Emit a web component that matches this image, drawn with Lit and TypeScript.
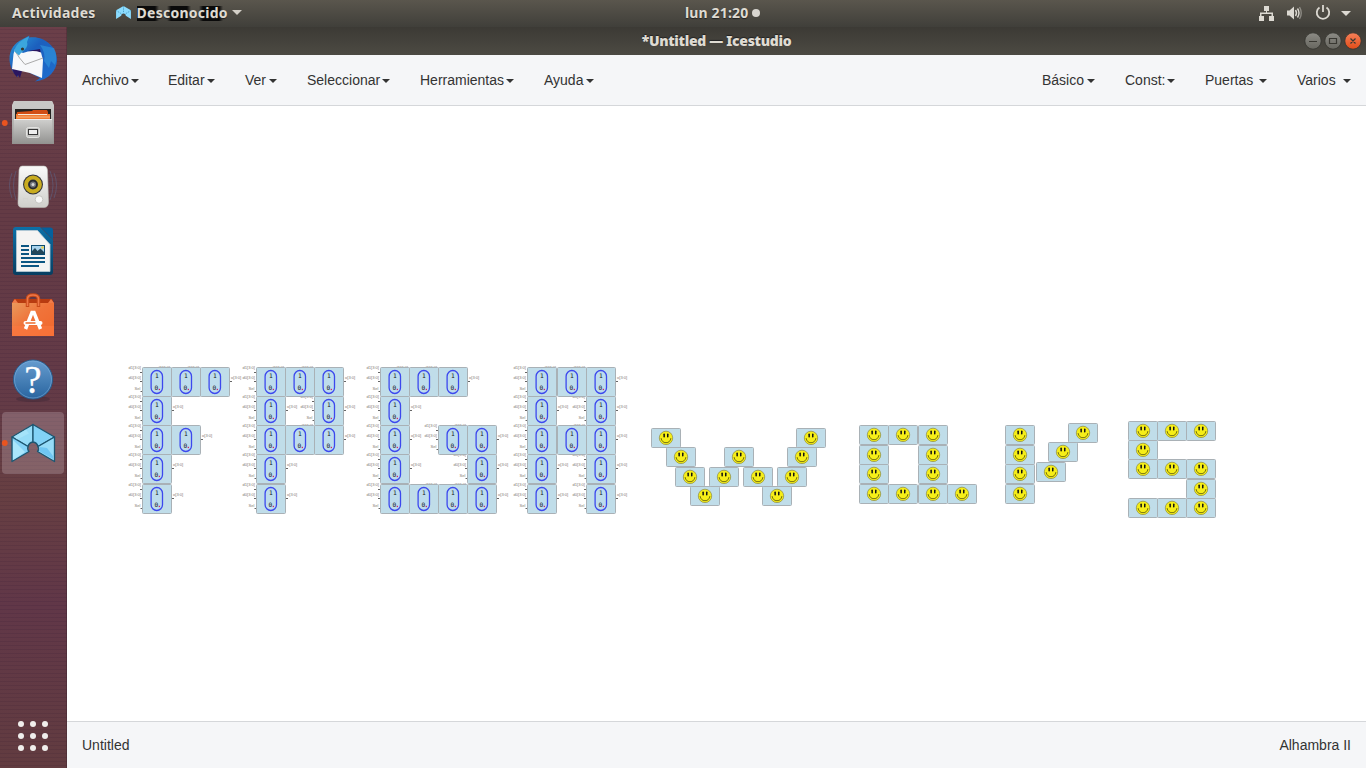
import { LitElement, html, svg, css } from "lit";
import { customElement } from "lit/decorators.js";

type Cell = [number, number];
interface Glyph { pins: [string, string, string, string]; cells: Cell[]; }

const ROWS = [367.5, 396.5, 425.5, 454.5, 484.5];

/** Expands column positions and per-row column indexes into block corners. */
const grid = (xs: number[], ys: number[], rows: number[][]): Cell[] =>
  rows.flatMap((cols, r) => cols.map((c) => [xs[c], ys[r]] as Cell));

const MUXES: Glyph[] = [
  { pins: ["d1[3:0]", "d0[3:0]", "Sel", "o[3:0]"],
    cells: grid([142.5, 171.5, 200.5], ROWS, [[0, 1, 2], [0], [0, 1], [0], [0]]) },
  { pins: ["d1[3:0]", "d0[3:0]", "Sel", "o[3:0]"],
    cells: grid([256.5, 285.5, 314.5], ROWS, [[0, 1, 2], [0, 2], [0, 1, 2], [0], [0]]) },
  { pins: ["d1[3:0]", "d0[3:0]", "Sel", "o[3:0]"],
    cells: grid([380.5, 409.5, 438.5, 467.5], ROWS, [[0, 1, 2], [0], [0, 2, 3], [0, 3], [0, 1, 2, 3]]) },
  { pins: ["d1[3:0]", "d0[3:0]", "Sel", "o[3:0]"],
    cells: grid([527.5, 557.5, 586.5], ROWS, [[0, 1, 2], [0, 2], [0, 1, 2], [0, 2], [0, 2]]) },
];

const Q_ROWS = [425.5, 445.5, 464.5, 484.5];
const SMILEYS: Cell[] = [
  [651.5, 428.5], [666.5, 447.5], [675.5, 467.5], [690.5, 486.5], [709.5, 467.5], [724.5, 447.5],
  [743.5, 467.5], [762.5, 486.5], [777.5, 467.5], [787.5, 447.5], [796.5, 428.5],
  ...grid([859.5, 888.5, 918.5, 947.5], Q_ROWS, [[0, 1, 2], [0, 2], [0, 2], [0, 1, 2, 3]]),
  ...grid([1005.5], Q_ROWS, [[0], [0], [0], [0]]),
  [1068.5, 423.5], [1048.5, 442.5], [1036.5, 462.5],
  ...grid([1128.5, 1157.5, 1186.5], [421.5, 440.5, 459.5, 479.5, 498.5],
    [[0, 1, 2], [0], [0, 1, 2], [2], [0, 1, 2]]),
];

@customElement("block-canvas")
export class BlockCanvas extends LitElement {
  static styles = css`
    :host { display: block; background: #fff; overflow: hidden; }
    svg { display: block; }
    .block { fill: #c0dde9; stroke: #a9b1b6; stroke-width: 1; }
    .pill { fill: #bddcec; stroke: #3c48ee; stroke-width: 1.3; }
    .bit { font: 6.2px "DejaVu Sans Mono", monospace; fill: #151515; }
    .dot { fill: #d01860; }
    .pin { font: 4.1px "Liberation Sans", sans-serif; fill: #857b75; }
    .stub { stroke: #666; stroke-width: 1; }
    .face { fill: #f6ee18; stroke: #8b8940; stroke-width: .7; }
    .eye { fill: #111; }
    .smile { fill: none; stroke: #55530f; stroke-width: .8; }
  `;
  private pins([x, y]: Cell, p: Glyph["pins"]) {
    return svg`
      <text class="pin" x=${x - 1.5} y=${y + 1} text-anchor="end">${p[0]}</text>
      <text class="pin" x=${x - 1.5} y=${y + 11.2} text-anchor="end">${p[1]}</text>
      <text class="pin" x=${x - 2} y=${y + 22.2} text-anchor="end">${p[2]}</text>
      <text class="pin" x=${x + 30.5} y=${y + 11.2}>${p[3]}</text>
      <path class="stub" d="M${x - 2.5} ${y + 5}h2.5M${x - 2.5} ${y + 14}h2.5M${x - 2} ${y + 24}h2M${x + 29} ${y + 14}h2.5"/>`;
  }
  private mux([x, y]: Cell) {
    return svg`
      <rect class="block" x=${x} y=${y} width="29" height="29" rx="1"/>
      <rect class="pill" x=${x + 8.6} y=${y + 3} width="11.4" height="23" rx="5.7"/>
      <text class="bit" x=${x + 12.4} y=${y + 10.5}>1</text>
      <text class="bit" x=${x + 11.9} y=${y + 22.5}>0</text>
      <rect class="dot" x=${x + 16.2} y=${y + 21.3} width="1.2" height="1.3"/>`;
  }
  private smiley([x, y]: Cell) {
    return svg`
      <rect class="block" x=${x} y=${y} width="29" height="19" rx="1"/>
      <circle class="face" cx=${x + 14.5} cy=${y + 9.4} r="6.7"/>
      <rect class="eye" x=${x + 11.9} y=${y + 5} width="1.5" height="4" rx=".7"/>
      <rect class="eye" x=${x + 15.5} y=${y + 5} width="1.5" height="4" rx=".7"/>
      <path class="smile" d="M${x + 9.6} ${y + 9.6}q.8 4.6 4.9 4.6t4.9-4.6"/>`;
  }
  render() {
    return html`<svg width="1299" height="615" viewBox="67 106 1299 615">
      ${MUXES.map((m) => m.cells.map((c) => this.pins(c, m.pins)))}
      ${MUXES.map((m) => m.cells.map((c) => this.mux(c)))}
      ${SMILEYS.map((c) => this.smiley(c))}
    </svg>`;
  }
}

const iceLogo = svg`
  <g stroke="#1d5670" stroke-width="1.3" stroke-linejoin="round">
    <path fill="#96dcf8" d="M33 424.500L12 437l16 9.500q1-4 5-4.500z"/>
    <path fill="#82d2f6" d="M33 424.500L54.500 437l-16.500 9.500q-1-4-5-4.500z"/>
    <path fill="#84d2f7" d="M12 437v24.500l17-10q-2-2-1-5z"/>
    <path fill="#96dcf8" d="M54.500 437v24.500l-17-10q2-2 .500-5z"/>
  </g>
  <path d="M13 440l12 12-12 8z" fill="#a9e6fb"/><path d="M14 436.500l12-7 3 4-12 6z" fill="#abe6fb" opacity=".7"/>
  <path d="M40 447l7 1 6 8v3l-14-8z" fill="#6fc6f2"/>`;

const iceLogoSmall = svg`
  <path fill="#8bdcff" d="M8 0L0 4.500V14l5.500-3.500Q5.500 8 8 8t2.500 2.500L16 14V4.500z"/>
  <path fill="none" stroke="#3a8fb5" stroke-width=".8" stroke-dasharray="1.500 1" d="M8 0v8M0 4.800l6 3.700M16 4.800l-6 3.700"/>`;

@customElement("app-dock")
export class AppDock extends LitElement {
  static styles = css`
    :host {
      display: block; overflow: hidden;
      background:
        repeating-linear-gradient(#0000 0 2px, rgba(30, 10, 40, .1) 2px 3px, #0000 3px 4px),
        linear-gradient(#6b3f49, #643b45 25%, #633a47 48%, #673f42 63%, #613748 78%, #623c40);
      box-shadow: inset -1px 0 rgba(40, 20, 30, .25);
    }
    svg { display: block; }
    .q { font: 39px "Liberation Serif", serif; fill: #fff; stroke: #fff; stroke-width: .3; }
  `;
  render() {
    return html`<svg width="67" height="741" viewBox="0 27 67 741">
      <defs>
        <linearGradient id="bird" x1="0" y1="0" x2="1" y2="1"><stop offset="0" stop-color="#2ba0dc"/><stop offset=".4" stop-color="#1c5fbd"/><stop offset="1" stop-color="#1e6fd0"/></linearGradient>
        <linearGradient id="metal" x1="0" y1="0" x2="0" y2="1"><stop offset="0" stop-color="#d0d0ce"/><stop offset="1" stop-color="#929290"/></linearGradient>
        <linearGradient id="white" x1="0" y1="0" x2="0" y2="1"><stop offset="0" stop-color="#fafafa"/><stop offset="1" stop-color="#cfcfcb"/></linearGradient>
        <linearGradient id="navy" x1="0" y1="0" x2="0" y2="1"><stop offset="0" stop-color="#0c70a8"/><stop offset="1" stop-color="#073e61"/></linearGradient>
        <linearGradient id="bag" x1="0" y1="0" x2="1" y2="1"><stop offset="0" stop-color="#e99a5c"/><stop offset=".45" stop-color="#f0733a"/><stop offset="1" stop-color="#f0672c"/></linearGradient>
        <linearGradient id="help" x1="0" y1="0" x2="0" y2="1"><stop offset="0" stop-color="#669ccf"/><stop offset="1" stop-color="#29659f"/></linearGradient>
      </defs>

      <path fill="url(#bird)" d="M9.500 60C9 49 16 42 22 39.500L29.500 35.500L29 37.500C43 35 57 46 57 60C57 70 49 80 35 81.500L40 78L30 73L17 66L18 77C13 73 10 67 9.500 60z"/>
      <path fill="#2f94db" opacity=".65" d="M40 45l14 3q4 8 1 17l-4-4-2 7-5-7q2-8-4-16z"/>
      <path fill="#2a1660" d="M12 67l10 4-2 7-2-3-1 2q-4-3-5-10zM28 51l12-2 1 5z"/>
      <path fill="#f7f8fa" d="M12 69l1.500-15L15 49l8 4q9-3.500 18-.500l2 7.500-1 18-12-5z"/>
      <path fill="none" stroke="#aaa" stroke-width="1" d="M15 51q4 7 10 13.500l18-6.500"/>
      <path fill="#3ba6dd" d="M14 51C17 42 24 39 29 36.500L27 42C29 48 23 50 19 55.500z"/>
      <circle cx="22.500" cy="49" r="1.600" fill="#3a3427"/>

      <path d="M14 101h38l2 4v39H12v-39z" fill="url(#metal)"/>
      <path d="M14 101h38l1.500 5H12.500z" fill="#c8c8c6"/>
      <rect x="15" y="109" width="36" height="10" fill="#252422"/>
      <path d="M17 112l15-1 1-1h14l1 2v7H16z" fill="#d24e14"/><path d="M16 114h34v5H16z" fill="#f37b31"/><path d="M18 114.500h29" stroke="#f8ead9" stroke-width="1"/><path d="M17 117h33" stroke="#f5b783"/>
      <path d="M14 119h38l1 25H13z" fill="url(#metal)"/><path d="M14 119.500h38" stroke="#eee"/>
      <rect x="26.500" y="127.500" width="13" height="10" rx="2" fill="#c4c4c2" stroke="#e3e3e1"/>
      <rect x="28.500" y="129.500" width="9" height="5" fill="#eee" stroke="#383838"/>

      <g fill="none" stroke="#5b6e96" stroke-width="1" opacity=".45"><path d="M16 171q-5 14 0 29M12 173q-5 12 0 25M50 171q6 14 0 29M54 173q5 12 0 25"/></g>
      <path d="M22 166h22q3 0 3.500 4l1 32q0 5-4 5.500h-23q-4-.500-3.500-5.500l1-32q.500-4 3-4z" fill="url(#white)" stroke="#b8b8b4" stroke-width=".6"/>
      <circle cx="33" cy="184.500" r="10" fill="#33343a"/><circle cx="33" cy="184.500" r="6.900" fill="none" stroke="#c9ac20" stroke-width="4"/><circle cx="33" cy="184.500" r="3.800" fill="#71747a" stroke="#28292d" stroke-width="1.400"/><circle cx="33" cy="184.500" r="1.500" fill="#d8d8d8"/>
      <circle cx="39" cy="199.500" r="3.800" fill="#f8f8f8" stroke="#c6c6c2"/><rect x="23.500" y="198.500" width="4" height="4" fill="none" stroke="#d5d5d1"/>

      <path d="M16 227h24l13 13v32q0 3-3 3H16q-3 0-3-3v-42q0-3 3-3z" fill="url(#navy)"/>
      <path d="M41 227.500h9q3 0 3 3v9z" fill="#04619d"/>
      <path d="M16.500 230.500h21l12.500 14v27H16.500z" fill="#f4f4f3" stroke="#b9cbd5" stroke-width=".8"/>
      <path d="M21 246h8M21 250h8M21 254h8M21 258h24M21 262h24M21 266h18" stroke="#0b5682" stroke-width="2"/>
      <rect x="31.500" y="245.500" width="13" height="9" fill="#a8d3ed" stroke="#0b4b70"/><path d="M32 254v-3l3-3 2.500 3 3-2.500 3.500 3.500v2z" fill="#22475a"/><circle cx="42.500" cy="247.500" r="1.300" fill="#f1cf43"/>

      <path d="M14 299h38l2 4H12z" fill="#b83b10"/><path d="M12 303l3-4 3 4zM48 303l3-4 3 4z" fill="#ef7c4a"/>
      <path d="M12 303h42v33H12z" fill="url(#bag)"/>
      <path d="M27.500 307v-8q0-4 5.500-4t5.500 4v8" fill="none" stroke="#c94b19" stroke-width="3.500"/><path d="M27.500 306v-7q0-4 5.500-4t5.500 4v7" fill="none" stroke="#ee7748" stroke-width="1.500"/>
      <path d="M12 326h42v10H12z" fill="#ff7c45" opacity=".45"/>
      <path d="M25.500 329L32 312.500h2L40.500 329" fill="none" stroke="#fff" stroke-width="3.500"/>
      <rect x="23.500" y="321" width="19" height="4" rx="2" fill="#fff"/><path d="M25.500 323h10" stroke="#ed6b2e" stroke-width="1.500"/>

      <ellipse cx="33" cy="399" rx="17" ry="3" fill="#2b1e30" opacity=".3"/>
      <circle cx="33" cy="379.500" r="19.500" fill="url(#help)" stroke="#285c8d" stroke-width="1"/><circle cx="33" cy="379.500" r="18.500" fill="none" stroke="#7fb0dc" stroke-width=".8" opacity=".7"/>
      <text class="q" x="33" y="393" text-anchor="middle">?</text>

      <rect x="2" y="412" width="62" height="62" rx="4" fill="#d6c3cb" opacity=".27"/>
      ${iceLogo}
      <circle cx="4.800" cy="123" r="2.900" fill="#e95420"/><circle cx="4.800" cy="443" r="2.900" fill="#e95420"/>
      ${[724, 736, 748].map((y) => [21, 33, 45].map((x) => svg`<circle cx=${x} cy=${y} r="3" fill="#f0eeec"/>`))}
    </svg>`;
  }
}

interface MenuItem { label: string; width: number; }
const LEFT: MenuItem[] = [
  { label: "Archivo", width: 49 }, { label: "Editar", width: 39 }, { label: "Ver", width: 24 },
  { label: "Seleccionar", width: 75 }, { label: "Herramientas", width: 86 }, { label: "Ayuda", width: 42 },
];
const RIGHT: MenuItem[] = [
  { label: "Básico", width: 45 }, { label: "Const:", width: 42 }, { label: "Puertas", width: 54 }, { label: "Varios", width: 46 },
];

@customElement("app-root")
export class AppRoot extends LitElement {
  static styles = css`
    :host { display: grid; width: 1366px; height: 768px; grid-template: 27px 741px / 67px 1299px; overflow: hidden; font: 14px "Liberation Sans", Arial, sans-serif; color: #333; }
    .panel { grid-column: 1 / 3; display: grid; grid-template-columns: 685px auto 1fr; align-items: center; padding-bottom: 2px; background: linear-gradient(#5a564d, #403f3a); color: #dfdbd2; font: 700 14px/25px "Noto Sans", sans-serif; text-shadow: 0 1px 1px #222; }
    .start { display: flex; align-items: center; padding-left: 12px; letter-spacing: .25px; }
    .app { display: flex; align-items: center; margin-left: 20px; }
    .app svg { margin-right: 6px; }
    .name {
      line-height: 20px;
      background:
        linear-gradient(90deg, #0a0a0a 0 18px, #0a0a0a00 22px 30px, #0a0a0a 34px 50px, #0a0a0a00 54px 62px, #0a0a0a 66px 82px, #0a0a0a00 86px) 0 3px / 100% 15px no-repeat;
    }
    .tri { border: 5px solid transparent; border-top-color: #d4d0c8; border-bottom: 0; }
    .name + .tri { margin-left: 4px; }
    .clock { display: flex; align-items: center; gap: 4px; letter-spacing: .15px; }
    .clock i { width: 8px; height: 8px; border-radius: 50%; background: #d8d5cf; }
    .tray { display: flex; justify-content: flex-end; padding-right: 15px; }
    .window { display: grid; grid-template-rows: 28px 50px 1px 615px 1px 46px; }
    .title { display: grid; grid-template-columns: 1fr auto 1fr; align-items: center; background: linear-gradient(#3c3a35, #4c4a43); color: #dfdbd2; font: 700 14px/28px "Noto Sans", sans-serif; letter-spacing: -.32px; text-shadow: 0 -1px 1px #222; }
    .title b { grid-column: 2; }
    .controls { display: flex; justify-content: flex-end; padding-right: 4px; }
    .menubar, .status { background: #f5f6f8; display: flex; justify-content: space-between; align-items: center; padding: 0 15px; }
    .group { display: flex; gap: 30px; }
    .group:first-child .item:first-child { margin-right: -1px; }
    .item { display: flex; align-items: center; white-space: nowrap; }
    .caret { border: 4px solid transparent; border-top-color: #333; border-bottom: 0; margin-top: 2px; }
    .line { background: #d5d7da; }
  `;
  private menu(items: MenuItem[]) {
    return html`<div class="group">${items.map((i) => html`<div class="item"><span style="width:${i.width}px">${i.label}</span><span class="caret"></span></div>`)}</div>`;
  }
  render() {
    return html`
      <header class="panel">
        <div class="start"><span>Actividades</span>
          <div class="app"><svg width="15" height="13" viewBox="0 0 16 14">${iceLogoSmall}</svg>
            <span class="name">Desconocido</span><span class="tri"></span></div>
        </div>
        <div class="clock">lun 21:20<i></i></div>
        <div class="tray"><svg width="93" height="20" viewBox="1258 3 93 20" fill="#dcd9d2">
          <path d="M1264 6h5v5h-2v1.500h6V16h1v5h-5v-5h2.500v-2h-10v2h2.500v5h-5v-5h1v-3.500h6V11h-2z" />
          <path d="M1287 10.500h2.500l4.500-4v13l-4.500-4h-2.500z"/>
          <g fill="none" stroke="#dcd9d2" stroke-width="1.400"><path d="M1295.500 10q2 3 0 6"/><path d="M1297.500 8.500q3 4.500 0 9"/><path opacity=".45" d="M1299.500 7q3.500 6 0 12"/></g>
          <path fill="none" stroke="#dcd9d2" stroke-width="1.800" d="M1319.500 7.500a6.200 6.200 0 1 0 7 0M1323 5v7"/>
          <path d="M1341 11h10l-5 5z"/>
        </svg></div>
      </header>
      <app-dock></app-dock>
      <section class="window">
        <div class="title"><b>*Untitled — Icestudio</b>
          <div class="controls"><svg width="58" height="20" viewBox="1304 31 58 20">
            <defs><linearGradient id="g" x1="0" y1="0" x2="0" y2="1"><stop stop-color="#8c8b85"/><stop offset="1" stop-color="#67665f"/></linearGradient>
            <linearGradient id="r" x1="0" y1="0" x2="0" y2="1"><stop stop-color="#f58059"/><stop offset="1" stop-color="#e24c18"/></linearGradient></defs>
            <g stroke="#34332e" stroke-width=".8"><circle cx="1313" cy="41" r="8.200" fill="url(#g)"/><circle cx="1333" cy="41" r="8.200" fill="url(#g)"/><circle cx="1353" cy="41" r="8.200" fill="url(#r)"/></g>
            <path d="M1309 41.500h8M1329.500 38.500h7v5h-7zM1350.500 38.500l5 5M1355.500 38.500l-5 5" fill="none" stroke="#393832" stroke-width="1.200"/>
          </svg></div>
        </div>
        <nav class="menubar">${this.menu(LEFT)}${this.menu(RIGHT)}</nav>
        <div class="line"></div>
        <block-canvas></block-canvas>
        <div class="line"></div>
        <footer class="status"><span>Untitled</span><span>Alhambra II</span></footer>
      </section>`;
  }
}
